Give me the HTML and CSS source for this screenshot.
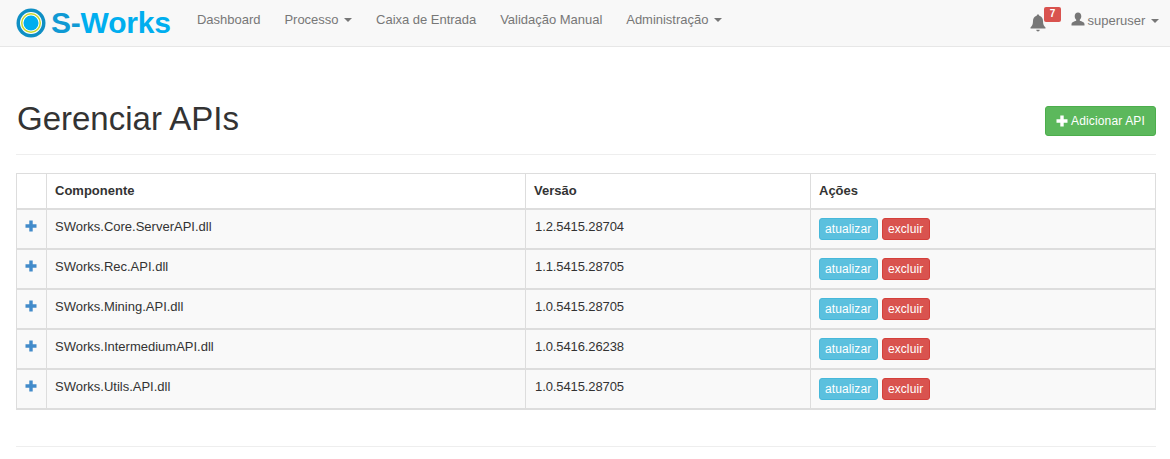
FILE: index.html
```html
<!DOCTYPE html>
<html lang="pt">
<head>
<meta charset="utf-8">
<title>Gerenciar APIs</title>
<link rel="stylesheet" href="styles.css">
</head>
<body>
<nav class="navbar">
  <a class="brand" href="#">
    <svg class="logo" width="32" height="32" viewBox="0 0 32 32"><circle cx="16" cy="16" r="14.5" fill="#0f8fc4"/><circle cx="16" cy="16" r="11" fill="#fff"/><circle cx="16" cy="16" r="10" fill="#c9d82c"/><circle cx="16" cy="16" r="8.5" fill="#fff"/><circle cx="16" cy="16" r="7.5" fill="#00aeef"/></svg>
    <span class="brand-text"><span class="brand-s">S-</span>Works</span>
  </a>
  <ul class="nav">
    <li>Dashboard</li>
    <li>Processo <b class="caret"></b></li>
    <li>Caixa de Entrada</li>
    <li>Validação Manual</li>
    <li>Administração <b class="caret"></b></li>
  </ul>
  <div class="nav-right">
    <span class="bell">
      <svg width="18" height="18" viewBox="0 0 18 18"><path d="M9 0.5c.8 0 1.300.5 1.300 1.200 2.600.6 3.700 2.700 3.700 5.300 0 3.400.9 5 2.500 6.500v1H1.500v-1C3.100 12 4 10.400 4 7c0-2.600 1.100-4.700 3.700-5.300C7.700 1 8.200.5 9 .5zM7.300 15.800h3.400c0 1-.7 1.700-1.700 1.700s-1.700-.7-1.700-1.700z" fill="#777"/></svg>
      <span class="badge">7</span>
    </span>
    <span class="user">
      <svg width="14" height="14" viewBox="0 0 14 14"><path d="M7 .5c2 0 3.300 1.500 3.300 3.700 0 1.500-.6 2.800-1.500 3.500v1.100c2 .7 4.700 1.500 4.700 3.200v1.500H.5V12c0-1.700 2.700-2.500 4.700-3.200V7.700C4.300 7 3.700 5.700 3.700 4.200 3.700 2 5 .5 7 .5z" fill="#777"/></svg>
      superuser <b class="caret"></b>
    </span>
  </div>
</nav>
<main class="container">
  <header class="page-header">
    <h1>Gerenciar APIs</h1>
    <button class="btn-add"><svg width="12" height="12" viewBox="0 0 12 12"><path d="M4.300.5h3.400v3.800h3.800v3.400H7.700v3.800H4.300V7.700H.5V4.300h3.800z" fill="#fff"/></svg> Adicionar API</button>
  </header>
  <table class="grid">
    <thead>
      <tr><th class="c-exp"></th><th class="c-name">Componente</th><th class="c-ver">Versão</th><th>Ações</th></tr>
    </thead>
    <tbody>
      <tr><td class="exp"><svg class="plus" width="12" height="12" viewBox="0 0 12 12"><path d="M4.300.5h3.400v3.800h3.800v3.400H7.700v3.800H4.300V7.700H.5V4.300h3.800z"/></svg></td><td>SWorks.Core.ServerAPI.dll</td><td class="ver">1.2.5415.28704</td><td><span class="btn info">atualizar</span> <span class="btn danger">excluir</span></td></tr>
      <tr><td class="exp"><svg class="plus" width="12" height="12" viewBox="0 0 12 12"><path d="M4.300.5h3.400v3.800h3.800v3.400H7.700v3.800H4.300V7.700H.5V4.300h3.800z"/></svg></td><td>SWorks.Rec.API.dll</td><td class="ver">1.1.5415.28705</td><td><span class="btn info">atualizar</span> <span class="btn danger">excluir</span></td></tr>
      <tr><td class="exp"><svg class="plus" width="12" height="12" viewBox="0 0 12 12"><path d="M4.300.5h3.400v3.800h3.800v3.400H7.700v3.800H4.300V7.700H.5V4.300h3.800z"/></svg></td><td>SWorks.Mining.API.dll</td><td class="ver">1.0.5415.28705</td><td><span class="btn info">atualizar</span> <span class="btn danger">excluir</span></td></tr>
      <tr><td class="exp"><svg class="plus" width="12" height="12" viewBox="0 0 12 12"><path d="M4.300.5h3.400v3.800h3.800v3.400H7.700v3.800H4.300V7.700H.5V4.300h3.800z"/></svg></td><td>SWorks.IntermediumAPI.dll</td><td class="ver">1.0.5416.26238</td><td><span class="btn info">atualizar</span> <span class="btn danger">excluir</span></td></tr>
      <tr><td class="exp"><svg class="plus" width="12" height="12" viewBox="0 0 12 12"><path d="M4.300.5h3.400v3.800h3.800v3.400H7.700v3.800H4.300V7.700H.5V4.300h3.800z"/></svg></td><td>SWorks.Utils.API.dll</td><td class="ver">1.0.5415.28705</td><td><span class="btn info">atualizar</span> <span class="btn danger">excluir</span></td></tr>
    </tbody>
  </table>
  <hr class="rule">
</main>
</body>
</html>
```
FILE: styles.css
```css
* { box-sizing: border-box; }
html, body { margin: 0; height: 100%; overflow: hidden; }
body { font-family: "Liberation Sans", Arial, sans-serif; font-size: 13px; line-height: 17px; color: #333; background: #fff; }

.navbar { display: flex; align-items: center; height: 47px; background: #f8f8f8; border-bottom: 1px solid #e7e7e7; padding: 0 0 0 15px; color: #777; }
.brand { display: flex; align-items: center; gap: 4px; text-decoration: none; width: 182px; margin-top: -1px; }
.brand-text { font-size: 30px; line-height: 32px; font-weight: 700; color: #00aeef; letter-spacing: -0.2px; }
.brand-s { color: #0f9ad4; }
.logo { flex: none; }
.nav { display: flex; gap: 24px; list-style: none; margin: -8px 0 0; padding: 0; font-size: 13px; }
.nav li { letter-spacing: -0.02px; }
.caret { display: inline-block; width: 0; height: 0; margin-left: 2px; vertical-align: middle; border-top: 4px solid #777; border-left: 4px solid transparent; border-right: 4px solid transparent; }
.nav-right { margin-left: auto; margin-top: -6px; display: flex; align-items: center; gap: 24px; padding-right: 11px; font-size: 13px; }
.bell { position: relative; display: block; width: 18px; height: 18px; margin-top: 6px; }
.bell svg { display: block; }
.badge { position: absolute; left: 15px; top: -7px; width: 17px; height: 15px; background: #d9534f; color: #fff; font-size: 10px; line-height: 14px; font-weight: 700; text-align: center; border-radius: 2px; }
.user svg { vertical-align: -1px; margin-right: -1px; }

.container { padding: 0 14px 0 16px; }
.page-header { display: flex; justify-content: space-between; align-items: flex-start; height: 108px; padding-top: 59px; border-bottom: 1px solid #eee; margin-bottom: 18px; }
h1 { margin: -7px 0 0 1px; font-size: 33px; line-height: 40px; font-weight: 400; color: #333; }
.btn-add { display: flex; align-items: center; gap: 3px; height: 30px; padding: 0 10px; background: #5cb85c; border: 1px solid #4cae4c; border-radius: 3px; color: #fff; font: 12px "Liberation Sans", Arial, sans-serif; letter-spacing: 0.15px; }

.grid { width: 1140px; border-collapse: collapse; table-layout: fixed; border: 1px solid #ddd; }
.c-exp { width: 30px; }
.c-name { width: 479px; }
.c-ver { width: 285px; }
.grid th { height: 35px; padding: 0 8px; text-align: left; font-weight: 700; border: 1px solid #ddd; border-bottom: 2px solid #ddd; }
.grid td { height: 40px; padding: 8px 8px 0; vertical-align: top; background: #f9f9f9; border: 1px solid #ddd; border-bottom: 2px solid #ddd; }
.grid td.exp { padding: 8px 0 0 8px; }
.grid td.ver { letter-spacing: -0.1px; padding-left: 9px; }
.plus { fill: #428bca; display: block; margin-top: 2px; }
.btn { display: inline-block; height: 22px; padding: 0 6px 0 5px; font-size: 12px; line-height: 20px; border: 1px solid; border-radius: 3px; color: #fff; letter-spacing: 0.1px; }
.info { background: #5bc0de; border-color: #46b8da; }
.danger { background: #d9534f; border-color: #d43f3a; }
.rule { margin: 36px 0 0; border: 0; border-top: 1px solid #eee; }
```
